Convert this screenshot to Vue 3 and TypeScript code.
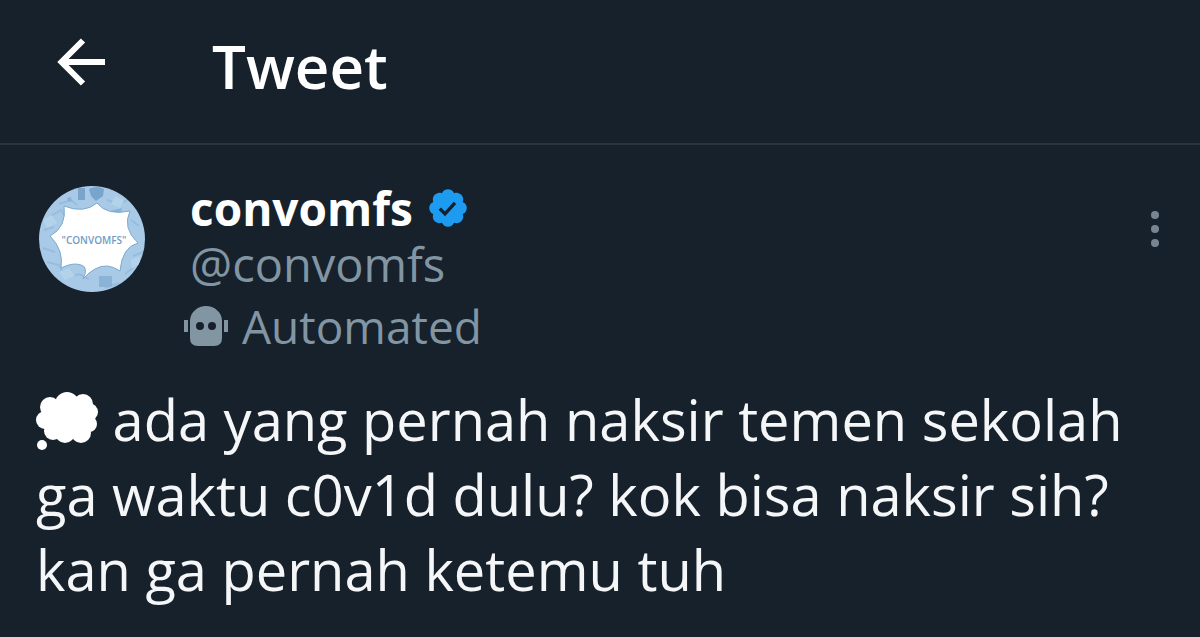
<script setup lang="ts">
interface Tweet {
  name: string
  handle: string
  label: string
  text: string
}

const tweet: Tweet = {
  name: 'convomfs',
  handle: '@convomfs',
  label: 'Automated',
  text: 'ada yang pernah naksir temen sekolah ga waktu c0v1d dulu? kok bisa naksir sih? kan ga pernah ketemu tuh',
}
</script>

<template>
  <main class="screen">
    <header class="bar">
      <button class="icon-button" type="button" aria-label="Back">
        <svg class="back" viewBox="0 0 48 48" aria-hidden="true">
          <path d="M26 2.500 4.500 24 26 45.500M4.500 24H48" fill="none" stroke="currentColor" stroke-width="6" />
        </svg>
      </button>
      <h1 class="title">Tweet</h1>
    </header>

    <article class="tweet">
      <div class="author">
        <svg class="avatar" viewBox="0 0 106 106" role="img" aria-label="convomfs avatar">
          <defs>
            <clipPath id="avatar-clip"><circle cx="53" cy="53" r="53" /></clipPath>
          </defs>
          <g clip-path="url(#avatar-clip)">
            <rect width="106" height="106" fill="#a8cae6" />
            <g fill="none" stroke="#97bddd" stroke-width="2">
              <path d="M12 30l10-6 4 6M20 18l12-4 6 5M68 14l12 4 8-4M5 44l10-3M4 62l12 4M8 76l12 3 4 8M28 92l12-4 10 5M92 34l8 6M94 70l10-4M86 88l8-6M66 102l14-5" />
            </g>
            <g fill="#b4d2ea">
              <path d="M4 34l9-5 5 8-10 5zM20 86l10-4 6 8-10 4zM76 10l9 4-4 8-9-4zM92 74l8-4 2 8-9 4z" />
            </g>
            <path d="M39 2h7v12h-7zM50 3q8-4 15 0l-1 7-7 5-5-5z" fill="#79a5cc" />
            <path d="M28 12l4-1 1 4-4 1zM60 90h13v11H60zM71 25l12-3-1 5z" fill="#8bb3d7" />
            <path d="M25 20Q45 28 58 17Q68 30 91 25Q83 42 99 57Q83 61 81 85Q68 76 56 83Q50 86 44 93Q50 81 42 79Q34 76 22 82Q25 64 11 50Q28 41 25 20Z" fill="#fff" stroke="#7fa9cd" stroke-width="1" />
          </g>
          <text x="55" y="58" class="avatar-text" text-anchor="middle">"CONVOMFS"</text>
        </svg>

        <div class="identity">
          <div class="name-row">
            <strong class="name">{{ tweet.name }}</strong>
            <svg class="verified" viewBox="0 0 22 22" role="img" aria-label="Verified account">
              <path fill="#1d9bf0" d="M20.396 11c-.018-.646-.215-1.275-.57-1.816-.354-.54-.852-.972-1.438-1.246.223-.607.270-1.264.140-1.897-.131-.634-.437-1.218-.882-1.687-.470-.445-1.053-.750-1.687-.882-.633-.130-1.290-.083-1.897.140-.273-.587-.704-1.086-1.245-1.440S11.647 1.620 11 1.604c-.646.017-1.273.213-1.813.568s-.969.854-1.240 1.440c-.608-.223-1.267-.272-1.902-.140-.635.130-1.220.436-1.690.882-.445.470-.749 1.055-.878 1.688-.130.633-.080 1.290.144 1.896-.587.274-1.087.705-1.443 1.245-.356.540-.555 1.170-.574 1.817.020.647.218 1.276.574 1.817.356.540.856.972 1.443 1.245-.224.606-.274 1.263-.144 1.896.130.634.433 1.218.877 1.688.470.443 1.054.747 1.687.878.633.132 1.290.084 1.897-.136.274.586.705 1.084 1.246 1.439.540.354 1.170.551 1.816.569.647-.016 1.276-.213 1.817-.567s.972-.854 1.245-1.440c.604.239 1.266.296 1.903.164.636-.132 1.220-.447 1.680-.907.460-.460.776-1.044.908-1.681s.075-1.299-.165-1.903c.586-.274 1.084-.705 1.439-1.246.354-.540.551-1.170.569-1.816z" />
              <path d="M6.900 11.300l2.600 2.600 5-5.500" fill="none" stroke="#17212b" stroke-width="1.700" />
            </svg>
          </div>
          <a class="handle" href="#profile">{{ tweet.handle }}</a>
          <div class="automated">
            <svg class="robot" viewBox="0 0 44 40" aria-hidden="true">
              <path fill="currentColor" fill-rule="evenodd" d="M22 0C30 0 38 6 38 15v17q0 8-8 8H14q-8 0-8-8V15C6 6 14 0 22 0zM16 16a4 4 0 1 0 0 8 4 4 0 0 0 0-8zm12 0a4 4 0 1 0 0 8 4 4 0 0 0 0-8z" />
              <path fill="currentColor" d="M0 14h4v12H0zM40 14h4v12h-4z" />
            </svg>
            <span>{{ tweet.label }}</span>
          </div>
        </div>

        <button class="icon-button" type="button" aria-label="More options">
          <svg class="more" viewBox="0 0 10 38" aria-hidden="true">
            <circle cx="5" cy="5" r="4" />
            <circle cx="5" cy="19" r="4" />
            <circle cx="5" cy="33" r="4" />
          </svg>
        </button>
      </div>

      <p class="text">
        <svg class="thought" viewBox="0 0 62 60" role="img" aria-label="Thought balloon">
          <g fill="#fff">
            <circle cx="14" cy="16" r="10" />
            <circle cx="31" cy="13" r="12" />
            <circle cx="47" cy="13" r="10" />
            <circle cx="53" cy="21" r="9" />
            <circle cx="53" cy="33" r="8" />
            <circle cx="45" cy="42" r="10" />
            <circle cx="29" cy="42" r="10" />
            <circle cx="17" cy="40" r="9" />
            <circle cx="9" cy="29" r="9" />
            <path d="M14 12h36v30H14z" />
            <circle cx="6" cy="54" r="5" />
          </g>
        </svg>
        {{ tweet.text }}
      </p>
    </article>
  </main>
</template>

<style>
body {
  margin: 0;
  background: #17212b;
}
</style>

<style scoped>
.screen {
  min-height: 100vh;
  box-sizing: border-box;
  background: #17212b;
  color: #fff;
  font-family: "Open Sans", "Noto Sans", sans-serif;
}

.bar {
  display: flex;
  align-items: flex-start;
  gap: 107px;
  padding: 26px 57px 37px;
  border-bottom: 2px solid #28333e;
}

.icon-button {
  display: flex;
  padding: 0;
  border: 0;
  background: none;
  color: inherit;
  cursor: pointer;
}

.back {
  width: 48px;
  height: 48px;
  margin-top: 12px;
}

.title {
  margin: 0;
  font-size: 60px;
  font-weight: 600;
  line-height: 80px;
}

.tweet {
  padding: 35px 36px 24px;
}

.author {
  display: flex;
  align-items: flex-start;
  padding: 0 4px 0 3px;
}

.avatar {
  flex: none;
  width: 106px;
  height: 106px;
  margin-top: 6px;
}

.avatar-text {
  fill: #6f9cc4;
  font-size: 10px;
  font-weight: 600;
}

.identity {
  flex: 1;
  margin-left: 45px;
}

.name-row {
  display: flex;
  align-items: center;
  gap: 13px;
  height: 56px;
}

.name {
  font-size: 46px;
  font-weight: 700;
  line-height: 56px;
}

.verified {
  width: 44px;
  height: 44px;
}

.handle {
  display: block;
  color: #8295a3;
  font-size: 47px;
  line-height: 56px;
  text-decoration: none;
}

.automated {
  display: flex;
  align-items: center;
  gap: 14px;
  margin-left: -6px;
  color: #8295a3;
  font-size: 46px;
  line-height: 68px;
}

.robot {
  width: 44px;
  height: 40px;
}

.more {
  width: 10px;
  height: 38px;
  margin-top: 30px;
  fill: #778592;
}

.text {
  margin: 22px 0 0;
  color: #f5f6f7;
  font-size: 56px;
  line-height: 75px;
}

.thought {
  width: 62px;
  height: 60px;
  vertical-align: -10px;
}
</style>
